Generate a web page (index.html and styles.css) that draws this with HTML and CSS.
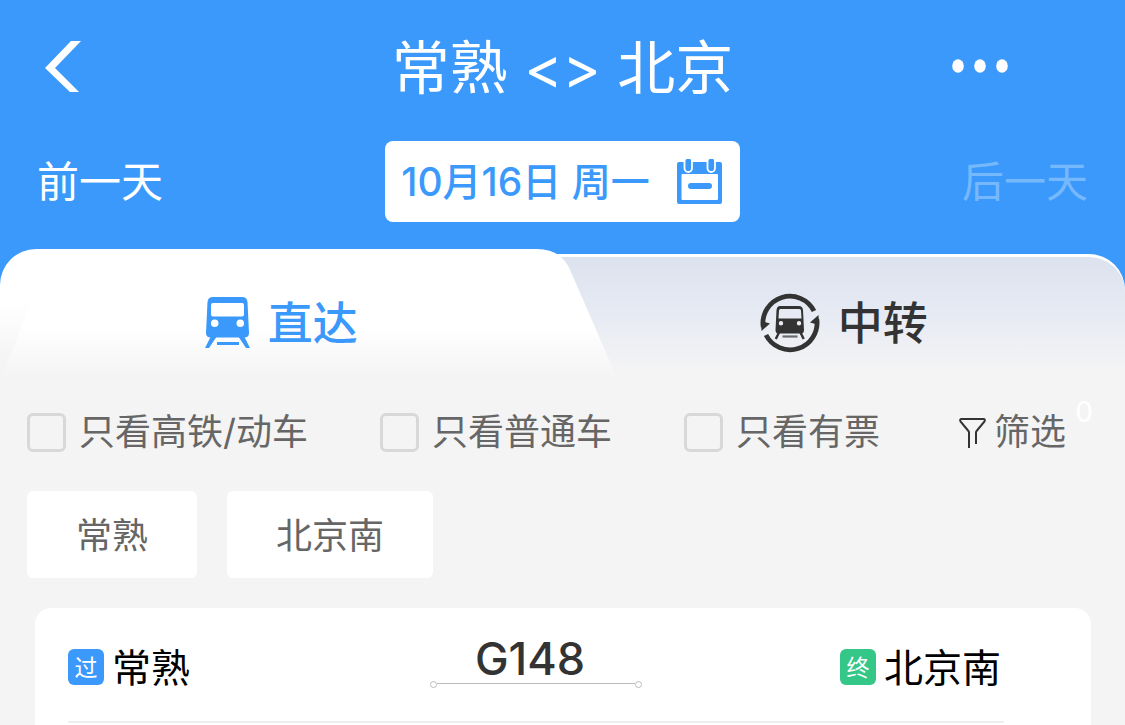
FILE: index.html
```html
<!DOCTYPE html>
<html lang="zh-CN">
<head>
    <meta charset="UTF-8">
    <meta name="viewport" content="width=device-width, initial-scale=1.0">
    <title>常熟 &lt;&gt; 北京</title>
    <link rel="stylesheet" href="styles.css">
</head>
<body>
    <header class="header">
        <div class="title-bar">
            <button type="button" class="icon-button back" aria-label="返回">
                <svg width="36" height="51" viewBox="0 0 36 51"><path d="M26 0h10L10 27l24 24H25L0 27z" fill="#fff"/></svg>
            </button>
            <h1>常熟 &lt;&gt; 北京</h1>
            <button type="button" class="icon-button more" aria-label="更多">
                <svg width="56" height="14" viewBox="0 0 56 14" fill="#fff">
                    <ellipse cx="6" cy="7" rx="5.8" ry="6.7"/>
                    <ellipse cx="28" cy="7" rx="5.8" ry="6.7"/>
                    <ellipse cx="50" cy="7" rx="5.8" ry="6.7"/>
                </svg>
            </button>
        </div>
        <div class="date-bar">
            <button type="button" class="day-button">前一天</button>
            <button type="button" class="date-button">
                <span class="date">10月16日 周一</span>
                <svg width="45" height="45" viewBox="0 0 45 45">
                    <path d="M2 3h41q2 0 2 2v38q0 2-2 2H2q-2 0-2-2V5q0-2 2-2zM5.500 15q-1 0-1 1v24q0 1 1 1H40q1 0 1-1V16q0-1-1-1z" fill="#3b99fb" fill-rule="evenodd"/>
                    <rect x="11" y="24" width="24" height="6" rx="3" fill="#3b99fb"/>
                    <rect x="7.500" y="-1.500" width="7.500" height="14.500" rx="3.700" fill="#3b99fb" stroke="#fff" stroke-width="1.800"/>
                    <rect x="30.500" y="-1.500" width="7.500" height="14.500" rx="3.700" fill="#3b99fb" stroke="#fff" stroke-width="1.800"/>
                </svg>
            </button>
            <button type="button" class="day-button next" disabled>后一天</button>
        </div>
    </header>

    <nav class="tabs">
        <svg class="tabs-bg" viewBox="0 0 1125 129" preserveAspectRatio="none" aria-hidden="true">
            <defs>
                <linearGradient id="active" x1="0" y1="0" x2="0" y2="1">
                    <stop offset="0.6" stop-color="#fff"/>
                    <stop offset="1" stop-color="#f4f4f4"/>
                </linearGradient>
                <linearGradient id="inactive" x1="0" y1="0" x2="0" y2="1">
                    <stop offset="0" stop-color="#dce2ee"/>
                    <stop offset="0.45" stop-color="#e6eaf3"/>
                    <stop offset="0.95" stop-color="#f4f4f4"/>
                </linearGradient>
                <linearGradient id="edge" x1="0" y1="0" x2="0" y2="1">
                    <stop offset="0" stop-color="#f4f4f6" stop-opacity="0"/>
                    <stop offset="0.8" stop-color="#f4f4f6" stop-opacity="0.8"/>
                </linearGradient>
            </defs>
            <path d="M540 5H1089A36 36 0 0 1 1125 41V60H540z" fill="#fff"/>
            <path d="M540 8H1089A36 35 0 0 1 1125 43V129H540z" fill="url(#inactive)"/>
            <path d="M0 129V36A36 36 0 0 1 36 0H537Q562 0 571 23L617 129z" fill="url(#active)"/>
            <path d="M0 50H32L2 129H0z" fill="url(#edge)"/>
        </svg>
        <a href="#direct" class="tab active">
            <svg width="45" height="51" viewBox="0 0 45 51">
                <path d="M8 0H37Q42 0 42.500 5L44 36Q44 40 40 40.500H5Q1 40 1 36L2.500 5Q3 0 8 0zM8 6Q6 6 6 8V17.500Q6 19.500 8 19.500H37Q39 19.500 39 17.500V8Q39 6 37 6zM9.700 22.500a3.800 3.800 0 1 0 0 7.600a3.800 3.800 0 1 0 0-7.600zM35.300 22.500a3.800 3.800 0 1 0 0 7.600a3.800 3.800 0 1 0 0-7.600z" fill="currentColor" fill-rule="evenodd"/>
                <path d="M6 39h6L4 51H0zM39 39h-6l8 12h4z" fill="currentColor"/>
                <rect x="12" y="45" width="22" height="3" fill="currentColor"/>
            </svg>
            <span>直达</span>
        </a>
        <a href="#transfer" class="tab">
            <svg width="60" height="60" viewBox="0 0 60 60">
                <g fill="none" stroke="currentColor" stroke-width="4.800">
                    <path d="M3.200 34A27 27 0 0 1 54 18"/>
                    <path d="M56.800 26A27 27 0 0 1 6 42"/>
                </g>
                <path d="M1.500 38L1 28L10 30.500zM58.500 22L59 32L50 29.500z" fill="currentColor"/>
                <path d="M20 13H39Q42.500 13 43 17L44 37Q44 40.500 41 40.500H18.500Q15.500 40.500 15.500 37L16.500 17Q17 13 20 13zM20.500 16Q19 16 19 17.500L18.500 25.500H41.500L41 17.500Q41 16 39.500 16zM21 28a2.200 2.200 0 1 0 0 4.400a2.200 2.200 0 1 0 0-4.400zM39 28a2.200 2.200 0 1 0 0 4.400a2.200 2.200 0 1 0 0-4.400z" fill="currentColor" fill-rule="evenodd"/>
                <path d="M19 39.500L15.800 46M40.500 39.500L43.700 46" stroke="currentColor" stroke-width="2.400"/>
                <path d="M22.500 43.500H37.500" stroke="currentColor" stroke-width="2.200" opacity="0.7"/>
            </svg>
            <span>中转</span>
        </a>
    </nav>

    <main>
        <div class="filters">
            <label class="check"><input type="checkbox" name="fast">只看高铁/动车</label>
            <label class="check"><input type="checkbox" name="normal">只看普通车</label>
            <label class="check"><input type="checkbox" name="available">只看有票</label>
            <button type="button" class="filter-button">
                <svg width="27" height="31" viewBox="0 0 27 31" fill="none" stroke="#333" stroke-width="2">
                    <path d="M10 31V15.500Q10 14.500 9 13.500L1.500 4.500Q.500 2 2.500 2H24.500Q26.500 2 25.500 4.500L18 13.500Q17 14.500 17 15.500V27"/>
                </svg>
                筛选
                <span class="count">0</span>
            </button>
        </div>

        <div class="stations">
            <button type="button" class="station-button">常熟</button>
            <button type="button" class="station-button">北京南</button>
        </div>

        <section class="train-card">
            <div class="train">
                <div class="stop"><span class="tag">过</span><span class="stop-name">常熟</span></div>
                <div class="train-number">
                    <strong>G148</strong>
                    <div class="track"></div>
                </div>
                <div class="stop end"><span class="tag terminal">终</span><span class="stop-name">北京南</span></div>
            </div>
        </section>
    </main>
</body>
</html>
```
FILE: styles.css
```css
* {
    box-sizing: border-box;
}
body {
    font-family: Inter, 'Noto Sans CJK SC', sans-serif;
    background-color: #f4f4f4;
    color: #333;
    margin: 0;
    min-height: 100vh;
    display: flex;
    flex-direction: column;
}
button {
    font-family: inherit;
    background: none;
    border: none;
    padding: 0;
    cursor: pointer;
}
svg {
    display: block;
    flex: none;
}

/* Header */
.header {
    background-color: #3b99fb;
    color: #fff;
    padding: 0 37px 27px;
}
.title-bar,
.date-bar {
    display: grid;
    grid-template-columns: 1fr auto 1fr;
    align-items: center;
}
.title-bar {
    height: 132px;
}
.date-bar {
    margin-top: 9px;
}
h1 {
    font-size: 58px;
    font-weight: 400;
    line-height: 80px;
    margin: 0;
    padding-top: 4px;
}
.back {
    justify-self: start;
    margin-left: 8px;
}
.more {
    justify-self: end;
    margin-right: 80px;
}
.day-button {
    justify-self: start;
    font-size: 42px;
    line-height: 60px;
    color: #fff;
}
.day-button.next {
    justify-self: end;
    color: #76b8fc;
}
.date-button {
    display: flex;
    align-items: center;
    gap: 27px;
    height: 81px;
    padding: 0 18px 0 16px;
    border-radius: 8px;
    background-color: #fff;
    color: #3b99fb;
    font-size: 39px;
    font-weight: 500;
}
.date {
    padding-bottom: 6px;
}

/* Tabs */
.tabs {
    position: relative;
    display: grid;
    grid-template-columns: 1fr 1fr;
    height: 129px;
    padding-top: 18px;
    background: linear-gradient(#3b99fb 50%, #f4f4f4 50%);
}
.tabs-bg {
    position: absolute;
    top: 0;
    left: 0;
    width: 100%;
    height: 100%;
}
.tab {
    position: relative;
    display: flex;
    align-items: center;
    justify-content: center;
    gap: 18px;
    color: #333;
    font-size: 45px;
    font-weight: 500;
    line-height: 66px;
    text-decoration: none;
}
.tab.active {
    color: #3b99fb;
}
.tab span {
    padding-top: 2px;
}

/* Filters */
main {
    flex: 1;
    display: flex;
    flex-direction: column;
}
.filters {
    display: flex;
    align-items: center;
    gap: 72px;
    padding: 27px 59px 0 27px;
    font-size: 36px;
    line-height: 54px;
    color: #666;
}
.check {
    display: flex;
    align-items: center;
    gap: 13px;
}
.check input {
    appearance: none;
    width: 39px;
    height: 39px;
    margin: 0;
    border: 3px solid #d8d8d8;
    border-radius: 6px;
}
.check input:checked {
    background-color: #3b99fb;
}
.filter-button {
    position: relative;
    display: flex;
    align-items: center;
    gap: 8px;
    margin-left: auto;
    font-size: 36px;
    line-height: 54px;
    color: #666;
}
.count {
    position: absolute;
    top: -20px;
    right: -27px;
    color: #fff;
    font-size: 28px;
}
.stations {
    display: flex;
    gap: 30px;
    padding: 32px 27px 30px;
}
.station-button {
    height: 87px;
    padding: 0 49px 4px;
    border-radius: 6px;
    background-color: #fff;
    font-size: 36px;
    color: #666;
}

/* Train list */
.train-card {
    flex: 1;
    margin: 0 34px 0 35px;
    padding: 0 87px 0 33px;
    border-radius: 16px 16px 0 0;
    background-color: #fff;
}
.train {
    display: grid;
    grid-template-columns: 1fr 210px 1fr;
    height: 115px;
    border-bottom: 2px solid #eee;
}
.stop {
    display: flex;
    align-items: center;
    gap: 8px;
    padding-top: 4px;
    color: #000;
    font-size: 39px;
}
.stop.end {
    justify-self: end;
    padding-right: 3px;
}
.stop-name {
    padding-bottom: 4px;
}
.tag {
    width: 36px;
    height: 36px;
    border-radius: 6px;
    background-color: #3b99fb;
    color: #fff;
    font-size: 23px;
    line-height: 38px;
    text-align: center;
}
.tag.terminal {
    background-color: #34c788;
}
.train-number {
    padding-top: 24px;
    text-align: center;
}
.train-number strong {
    display: block;
    padding-right: 12px;
    font-size: 45px;
    font-weight: 500;
    line-height: 54px;
}
/* line with a small ring at each end */
.track {
    position: relative;
    height: 1px;
    margin: -3px 6px 0;
    background-color: #bbb;
}
.track::before,
.track::after {
    content: "";
    position: absolute;
    top: -2px;
    width: 5px;
    height: 5px;
    border: 1px solid #bbb;
    border-radius: 50%;
}
.track::before {
    right: 100%;
}
.track::after {
    left: 100%;
}
```
